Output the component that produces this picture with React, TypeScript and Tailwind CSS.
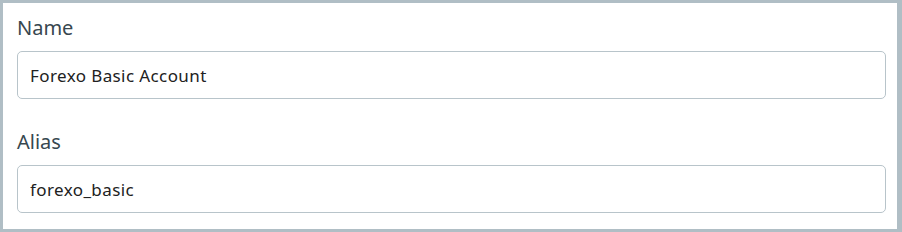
import { useState } from "react";

const FONT = { fontFamily: '"Noto Sans", "Open Sans", sans-serif' };

function Field({ label, value, onChange }: { label: string; value: string; onChange: (v: string) => void }) {
  return (
    <div>
      <label className="block text-[20px] leading-[24px] text-[#37474f] mb-[11px]">{label}</label>
      <input
        value={value}
        onChange={(e) => onChange(e.target.value)}
        className="block w-full h-[48px] px-[12px] text-[17px] tracking-[0.4px] text-[#212121] bg-white border border-[#b8c4ca] rounded-[5px] outline-none"
      />
    </div>
  );
}

export default function App() {
  const [name, setName] = useState("Forexo Basic Account");
  const [alias, setAlias] = useState("forexo_basic");

  return (
    <div className="w-[902px] h-[232px] bg-[#b0bec5] pt-[3px] pl-[3px] pr-[5px] pb-[3px]" style={FONT}>
      <div className="h-full bg-white pt-[13px] pl-[14px] pr-[11px] pb-[16px] flex flex-col gap-[31px]">
        <Field label="Name" value={name} onChange={setName} />
        <Field label="Alias" value={alias} onChange={setAlias} />
      </div>
    </div>
  );
}
